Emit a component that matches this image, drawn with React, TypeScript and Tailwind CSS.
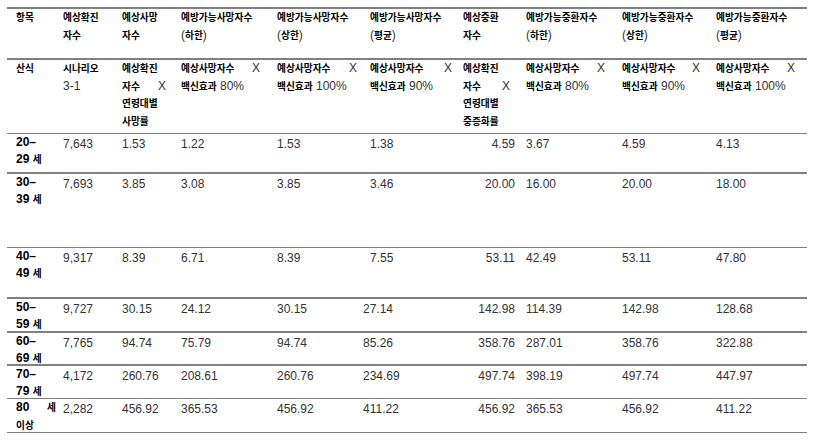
import React from "react";

// 한글은 작게, 숫자/라틴 문자는 12px 로 섞어서 출력
const HANGUL = /([\uAC00-\uD7A3\u3131-\u318E]+)/;

function Mixed({ text, bold }: { text: string; bold?: boolean }) {
  return (
    <>
      {text.split(HANGUL).map((part, i) =>
        HANGUL.test(part) ? (
          <span
            key={i}
            className={`text-[9.7px] text-black ${bold ? "font-bold" : "font-semibold"}`}
          >
            {part}
          </span>
        ) : (
          <React.Fragment key={i}>{part}</React.Fragment>
        )
      )}
    </>
  );
}

const cols = [
  "w-[49px] pl-[9px] pr-0",
  "w-[59px] pl-[7px] pr-[8px]",
  "w-[59px] pl-[7px] pr-[8px]",
  "w-[96px] pl-[7px] pr-[10px]",
  "w-[93px] pl-[7px] pr-[6px]",
  "w-[93px] pl-[7px] pr-[4px]",
  "w-[63px] pl-[7px] pr-[9px]",
  "w-[96px] pl-[7px] pr-[10px]",
  "w-[94px] pl-[7px] pr-[9px]",
  "w-[98px] pl-[7px] pr-[12px]",
];

const header = [
  "항목",
  "예상확진 자수",
  "예상사망 자수",
  "예방가능사망자수 (하한)",
  "예방가능사망자수 (상한)",
  "예방가능사망자수 (평균)",
  "예상중환 자수",
  "예방가능중환자수 (하한)",
  "예방가능중환자수 (상한)",
  "예방가능중환자수 (평균)",
];

const formula = [
  "산식",
  "시나리오 3-1",
  "예상확진 자수 X 연령대별 사망률",
  "예상사망자수 X 백신효과 80%",
  "예상사망자수 X 백신효과 100%",
  "예상사망자수 X 백신효과 90%",
  "예상확진 자수 X 연령대별 중증화률",
  "예상사망자수 X 백신효과 80%",
  "예상사망자수 X 백신효과 90%",
  "예상사망자수 X 백신효과 100%",
];

type DataRow = { age: string; values: string[]; h: string; border: string };

const dataRows: DataRow[] = [
  { age: "20–\n29 세", h: "h-[39px]", border: "border-t", values: ["7,643", "1.53", "1.22", "1.53", "1.38", "4.59", "3.67", "4.59", "4.13"] },
  { age: "30–\n39 세", h: "h-[75px]", border: "border-t-2", values: ["7,693", "3.85", "3.08", "3.85", "3.46", "20.00", "16.00", "20.00", "18.00"] },
  { age: "40–\n49 세", h: "h-[50px]", border: "border-t", values: ["9,317", "8.39", "6.71", "8.39", "7.55", "53.11", "42.49", "53.11", "47.80"] },
  { age: "50–\n59 세", h: "h-[34px]", border: "border-t-2", values: ["9,727", "30.15", "24.12", "30.15", "27.14", "142.98", "114.39", "142.98", "128.68"] },
  { age: "60–\n69 세", h: "h-[33px]", border: "border-t-2", values: ["7,765", "94.74", "75.79", "94.74", "85.26", "358.76", "287.01", "358.76", "322.88"] },
  { age: "70–\n79 세", h: "h-[34px]", border: "border-t-2", values: ["4,172", "260.76", "208.61", "260.76", "234.69", "497.74", "398.19", "497.74", "447.97"] },
  { age: "80 세 이상", h: "h-[34px]", border: "border-t", values: ["2,282", "456.92", "365.53", "456.92", "411.22", "456.92", "365.53", "456.92", "411.22"] },
];

function TextRow({ cells, h, border }: { cells: string[]; h: string; border: string }) {
  return (
    <div className={`flex ${h} ${border} border-[#808080]`}>
      {cells.map((c, i) => (
        <div key={i} className={`${cols[i]} shrink-0 break-keep text-justify [text-justify:inter-word]`}>
          <Mixed text={c} />
        </div>
      ))}
    </div>
  );
}

export default function App() {
  return (
    <div className="min-h-screen bg-white pt-[7px] pl-[7px] font-['Liberation_Sans','Noto_Sans_CJK_KR',sans-serif] text-[12px] leading-[16.6px] text-[#333]">
      <div className="w-[800px] border-b border-[#808080]">
        <TextRow cells={header} h="h-[51px]" border="border-t-2" />
        <TextRow cells={formula} h="h-[75px]" border="border-t-2" />

        {dataRows.map((row, r) => (
          <div key={row.age} className={`flex ${row.h} ${row.border} border-[#808080]`}>
            <div className={`${cols[0]} shrink-0 break-keep whitespace-pre-line text-justify font-bold text-black`}>
              <Mixed text={row.age} bold />
            </div>
            {row.values.map((v, i) => {
              const col = i + 1;
              // 예상중환자수 열은 오른쪽 정렬
              const align =
                col === 6
                  ? "text-right !pr-[4px]"
                  : col === 5 && r >= 3
                  ? "!pl-0"
                  : "";
              return (
                <div key={i} className={`${cols[col]} ${align} shrink-0 pt-[2px]`}>
                  {v}
                </div>
              );
            })}
          </div>
        ))}
      </div>
    </div>
  );
}
